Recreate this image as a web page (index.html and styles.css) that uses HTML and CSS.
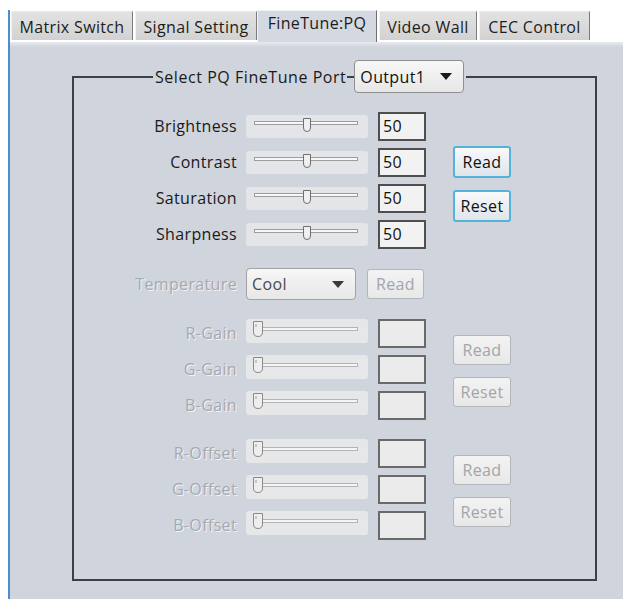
FILE: index.html
```html
<!DOCTYPE html>
<html>
<head>
<meta charset="utf-8">
<link rel="stylesheet" href="styles.css">
</head>
<body>
<div class="app">
  <div class="tabs">
    <div class="tab t1">Matrix Switch</div>
    <div class="tab t2">Signal Setting</div>
    <div class="tab t3 active">FineTune:PQ</div>
    <div class="tab t4">Video Wall</div>
    <div class="tab t5">CEC Control</div>
  </div>
  <div class="panel">
    <fieldset class="group">
      <legend class="legend">
        <span class="legend-text">Select PQ FineTune Port</span>
        <span class="dash"></span>
        <span class="combo port">Output1<svg class="arrow" width="12" height="7" viewBox="0 0 12 7"><path d="M0 0H12L6 7Z" fill="#1a1a1a"/></svg></span>
      </legend>

      <div class="section s1">
        <div class="rows">
          <div class="row">
            <span class="lbl">Brightness</span>
            <div class="slider"><svg width="122" height="24" viewBox="0 0 122 24"><rect x="8.5" y="6.5" width="103" height="3" fill="#f7f7f7" stroke="#9c9c9c"/><path d="M57.5 3.5H64.5V13Q64.5 16.5 61 16.5Q57.5 16.5 57.5 13Z" fill="#efefef" stroke="#6f6f6f"/></svg></div>
            <div class="val">50</div>
          </div>
          <div class="row">
            <span class="lbl">Contrast</span>
            <div class="slider"><svg width="122" height="24" viewBox="0 0 122 24"><rect x="8.5" y="6.5" width="103" height="3" fill="#f7f7f7" stroke="#9c9c9c"/><path d="M57.5 3.5H64.5V13Q64.5 16.5 61 16.5Q57.5 16.5 57.5 13Z" fill="#efefef" stroke="#6f6f6f"/></svg></div>
            <div class="val">50</div>
          </div>
          <div class="row">
            <span class="lbl">Saturation</span>
            <div class="slider"><svg width="122" height="24" viewBox="0 0 122 24"><rect x="8.5" y="6.5" width="103" height="3" fill="#f7f7f7" stroke="#9c9c9c"/><path d="M57.5 3.5H64.5V13Q64.5 16.5 61 16.5Q57.5 16.5 57.5 13Z" fill="#efefef" stroke="#6f6f6f"/></svg></div>
            <div class="val">50</div>
          </div>
          <div class="row">
            <span class="lbl">Sharpness</span>
            <div class="slider"><svg width="122" height="24" viewBox="0 0 122 24"><rect x="8.5" y="6.5" width="103" height="3" fill="#f7f7f7" stroke="#9c9c9c"/><path d="M57.5 3.5H64.5V13Q64.5 16.5 61 16.5Q57.5 16.5 57.5 13Z" fill="#efefef" stroke="#6f6f6f"/></svg></div>
            <div class="val">50</div>
          </div>
        </div>
        <div class="btns btns-main">
          <button class="btn">Read</button>
          <button class="btn">Reset</button>
        </div>
      </div>

      <div class="temp-row">
        <span class="lbl dis">Temperature</span>
        <span class="combo temp">Cool<svg class="arrow" width="12" height="7" viewBox="0 0 12 7"><path d="M0 0H12L6 7Z" fill="#3a3a3a"/></svg></span>
        <button class="btn dis-btn temp-read">Read</button>
      </div>

      <div class="section s2">
        <div class="rows">
          <div class="row drow">
            <span class="lbl dis">R-Gain</span>
            <div class="slider dslider"><svg width="122" height="24" viewBox="0 0 122 24"><rect x="8.5" y="8.5" width="103" height="3" fill="#f5f5f5" stroke="#b4b4b4"/><path d="M7.5 2.5H16.5V13Q16.5 17.5 12 17.5Q7.5 17.5 7.5 13Z" fill="#eeeeee" stroke="#8a8a8a"/><path d="M10 5V8" stroke="#9a9a9a"/></svg></div>
            <div class="val dval"></div>
          </div>
          <div class="row drow">
            <span class="lbl dis">G-Gain</span>
            <div class="slider dslider"><svg width="122" height="24" viewBox="0 0 122 24"><rect x="8.5" y="8.5" width="103" height="3" fill="#f5f5f5" stroke="#b4b4b4"/><path d="M7.5 2.5H16.5V13Q16.5 17.5 12 17.5Q7.5 17.5 7.5 13Z" fill="#eeeeee" stroke="#8a8a8a"/><path d="M10 5V8" stroke="#9a9a9a"/></svg></div>
            <div class="val dval"></div>
          </div>
          <div class="row drow">
            <span class="lbl dis">B-Gain</span>
            <div class="slider dslider"><svg width="122" height="24" viewBox="0 0 122 24"><rect x="8.5" y="8.5" width="103" height="3" fill="#f5f5f5" stroke="#b4b4b4"/><path d="M7.5 2.5H16.5V13Q16.5 17.5 12 17.5Q7.5 17.5 7.5 13Z" fill="#eeeeee" stroke="#8a8a8a"/><path d="M10 5V8" stroke="#9a9a9a"/></svg></div>
            <div class="val dval"></div>
          </div>
        </div>
        <div class="btns btns-dis">
          <button class="btn dis-btn">Read</button>
          <button class="btn dis-btn">Reset</button>
        </div>
      </div>

      <div class="section s3">
        <div class="rows">
          <div class="row drow">
            <span class="lbl dis">R-Offset</span>
            <div class="slider dslider"><svg width="122" height="24" viewBox="0 0 122 24"><rect x="8.5" y="8.5" width="103" height="3" fill="#f5f5f5" stroke="#b4b4b4"/><path d="M7.5 2.5H16.5V13Q16.5 17.5 12 17.5Q7.5 17.5 7.5 13Z" fill="#eeeeee" stroke="#8a8a8a"/><path d="M10 5V8" stroke="#9a9a9a"/></svg></div>
            <div class="val dval"></div>
          </div>
          <div class="row drow">
            <span class="lbl dis">G-Offset</span>
            <div class="slider dslider"><svg width="122" height="24" viewBox="0 0 122 24"><rect x="8.5" y="8.5" width="103" height="3" fill="#f5f5f5" stroke="#b4b4b4"/><path d="M7.5 2.5H16.5V13Q16.5 17.5 12 17.5Q7.5 17.5 7.5 13Z" fill="#eeeeee" stroke="#8a8a8a"/><path d="M10 5V8" stroke="#9a9a9a"/></svg></div>
            <div class="val dval"></div>
          </div>
          <div class="row drow">
            <span class="lbl dis">B-Offset</span>
            <div class="slider dslider"><svg width="122" height="24" viewBox="0 0 122 24"><rect x="8.5" y="8.5" width="103" height="3" fill="#f5f5f5" stroke="#b4b4b4"/><path d="M7.5 2.5H16.5V13Q16.5 17.5 12 17.5Q7.5 17.5 7.5 13Z" fill="#eeeeee" stroke="#8a8a8a"/><path d="M10 5V8" stroke="#9a9a9a"/></svg></div>
            <div class="val dval"></div>
          </div>
        </div>
        <div class="btns btns-dis">
          <button class="btn dis-btn">Read</button>
          <button class="btn dis-btn">Reset</button>
        </div>
      </div>
    </fieldset>
  </div>
</div>
</body>
</html>
```

FILE: styles.css
```css
* { box-sizing: border-box; }

body {
  margin: 0;
  background: #ffffff;
  font-family: "Open Sans", "Noto Sans", sans-serif;
  font-size: 16px;
  letter-spacing: 0.35px;
  color: #1a1a1a;
}

.app {
  margin: 10px 0 0 8px;
  width: 615px;
  border-left: 2px solid #4a8fd0;
}

.tabs {
  display: flex;
  align-items: flex-end;
  height: 32px;
  padding-left: 1px;
  background: #ffffff;
}

.tab {
  height: 29px;
  margin-bottom: 2px;
  margin-right: 2px;
  display: flex;
  align-items: center;
  justify-content: center;
  background: linear-gradient(#e2e2e2, #d2d2d2);
  border-left: 1px solid #f2f2f2;
  border-right: 1px solid #7a7a7a;
  border-top: 1px solid #e8e8e8;
  color: #1c1c1c;
  white-space: nowrap;
  padding-top: 2px;
}

.t1 { width: 122px; margin-right: 2px; }
.t2 { width: 122px; margin-right: 0; }
.t3 { width: 120px; }
.t4 { width: 98px; }
.t5 { width: 111px; }

.tab.active {
  height: 32px;
  margin-bottom: 0;
  background: #d4d8e0;
  border-left: 1px solid #f4f5f7;
  border-top: 1px solid #f0f1f4;
  border-right: 1px solid #6e6e6e;
  align-items: flex-start;
  padding-top: 1px;
}

.panel {
  height: 557px;
  background: linear-gradient(#e9ebef 0, #d0d4dc 5px, #d0d4dc 100%);
  padding-top: 18px;
}

.group {
  margin: 0 0 0 62px;
  width: 525px;
  border: 2px solid #3b4048;
  padding: 0 0 39px 0;
  min-width: 0;
}

.legend {
  margin-left: 79px;
  padding: 0 2px;
  display: flex;
  align-items: center;
}

.legend-text {
  color: #1a1a1a;
  letter-spacing: 0.55px;
}

.dash {
  width: 7px;
  height: 2px;
  background: #3b4048;
  margin-left: 1px;
}

.combo {
  display: flex;
  align-items: center;
  justify-content: space-between;
  border: 1px solid #8f8f8f;
  border-radius: 4px;
  background: linear-gradient(#f7f7f7, #e7e7e7);
  padding: 0 11px 0 5px;
}

.port {
  width: 110px;
  height: 33px;
  color: #111;
}

.arrow { display: block; }

.section {
  display: flex;
  align-items: flex-start;
}

.s1 { margin-top: 19px; }
.s2 { margin-top: 19px; }
.s3 { margin-top: 19px; }

.rows {
  display: flex;
  flex-direction: column;
  gap: 7px;
}

.row {
  display: flex;
  align-items: center;
  height: 29px;
}

.drow { align-items: flex-start; }

.lbl {
  width: 163px;
  text-align: right;
  line-height: 29px;
  white-space: nowrap;
}

.dis {
  color: #a5a9b1;
  text-shadow: 1px 1px 0 #f2f3f5;
}

.slider {
  margin-left: 9px;
  width: 122px;
  height: 23px;
  background: #e4e5e8;
  border-radius: 3px;
  overflow: hidden;
}

.slider svg { display: block; }

.dslider {
  height: 24px;
  background: #e6e7e9;
}

.val {
  margin-left: 10px;
  width: 48px;
  height: 29px;
  border: 2px solid #4f4f4f;
  background: #f2f2f2;
  padding-left: 3px;
  line-height: 25px;
  color: #111;
}

.dval {
  border-color: #6a6a6a;
  background: #ebebeb;
}

.btns {
  display: flex;
  flex-direction: column;
  gap: 12px;
  margin-left: 27px;
}

.btns-main { padding-top: 34px; }
.btns-dis { padding-top: 16px; }

.btn {
  width: 58px;
  height: 32px;
  font-family: inherit;
  font-size: 16px;
  letter-spacing: 0.35px;
  color: #111;
  border: 2px solid #55b3d9;
  border-radius: 3px;
  background: linear-gradient(#f8f9fa, #dfe5ea);
  padding: 0;
  margin: 0;
}

.dis-btn {
  height: 30px;
  border: 1px solid #b3b6bb;
  background: linear-gradient(#f3f3f3, #e8e8e8);
  color: #a2a5aa;
}

.temp-row {
  display: flex;
  align-items: center;
  height: 32px;
  margin-top: 19px;
}

.temp {
  margin-left: 9px;
  width: 110px;
  height: 32px;
  color: #4a4a4a;
  border-color: #a2a2a2;
}

.temp-read {
  margin-left: 11px;
  width: 57px;
}
```
